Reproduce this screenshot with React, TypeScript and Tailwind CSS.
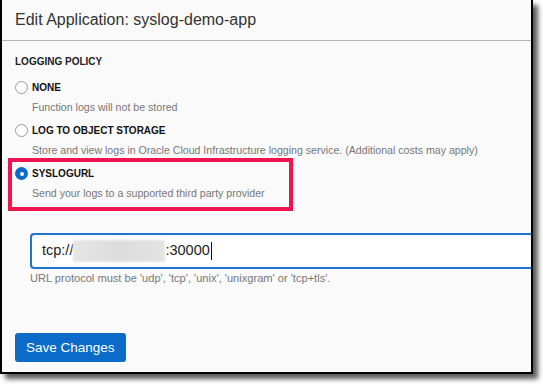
import React from "react";

const options = [
  { id: "none", label: "NONE", help: "Function logs will not be stored" },
  {
    id: "object",
    label: "LOG TO OBJECT STORAGE",
    help: "Store and view logs in Oracle Cloud Infrastructure logging service. (Additional costs may apply)",
  },
  { id: "syslog", label: "SYSLOGURL", help: "Send your logs to a supported third party provider" },
];

const Radio = ({ checked }: { checked: boolean }) =>
  checked ? (
    <span className="flex h-[13px] w-[13px] shrink-0 items-center justify-center rounded-full bg-[#0a6bc9]">
      <span className="h-[4px] w-[4px] rounded-full bg-white" />
    </span>
  ) : (
    <span className="h-[13px] w-[13px] shrink-0 rounded-full border border-[#9a9a9a] bg-white" />
  );

const App: React.FC = () => {
  const selected = "syslog";

  return (
    <div className="h-[384px] w-[543px] overflow-hidden bg-white font-['Liberation_Sans',Arial,sans-serif]">
      <div className="h-[374px] w-[533px] overflow-hidden border-x-2 border-b-2 border-black bg-[#fafafa] shadow-[5px_5px_5px_rgba(0,0,0,0.65)]">
        {/* Header */}
        <div className="flex h-[41px] items-center border-b border-[#a9b3bd] px-[13px]">
          <h1 className="text-[16px] text-[#333]">Edit Application: syslog-demo-app</h1>
        </div>

        <div className="pl-[13px] pt-[13px]">
          <div className="text-[10px] font-bold leading-[15px] text-[#222]">LOGGING POLICY</div>

          <div className="mt-[11px] flex flex-col">
            {options.map((o, i) => (
              <div
                key={o.id}
                className={
                  o.id === selected
                    ? "-ml-[7px] w-[285px] border-4 border-[#f0134d] pb-[6px] pl-[3px] pt-[4px]"
                    : i === 0
                    ? "mb-[8px]"
                    : ""
                }
              >
                <div className="flex h-[15px] items-center gap-[4px]">
                  <Radio checked={o.id === selected} />
                  <span className="text-[10px] font-bold leading-[15px] text-[#111]">{o.label}</span>
                </div>
                <div className="mt-[4px] pl-[17px] text-[10.6px] leading-[16px] text-[#777]">{o.help}</div>
              </div>
            ))}
          </div>

          {/* Syslog URL input */}
          <div className="ml-[15px] mt-[22px]">
            <div className="flex h-[36px] w-[520px] items-center rounded-l-[4px] border-2 border-r-0 border-[#1e76d1] bg-white pl-[10px] text-[14.5px] text-[#222]">
              <span>tcp://</span>
              <span className="h-[22px] w-[92px] bg-gradient-to-r from-[#e6e6e6] via-[#dcdcdc] to-[#e4e4e4] blur-[1px]" />
              <span>:30000</span>
              <span className="ml-[1px] h-[18px] w-px bg-[#111]" />
            </div>
            <div className="mt-[1px] text-[11.1px] leading-[16px] text-[#777]">
              URL protocol must be 'udp', 'tcp', 'unix', 'unixgram' or 'tcp+tls'.
            </div>
          </div>

          <button className="mt-[47px] h-[29px] rounded-[3px] bg-[#0a6bc9] px-[11px] text-[13.5px] leading-[29px] text-white">
            Save Changes
          </button>
        </div>
      </div>
    </div>
  );
};

export default App;
